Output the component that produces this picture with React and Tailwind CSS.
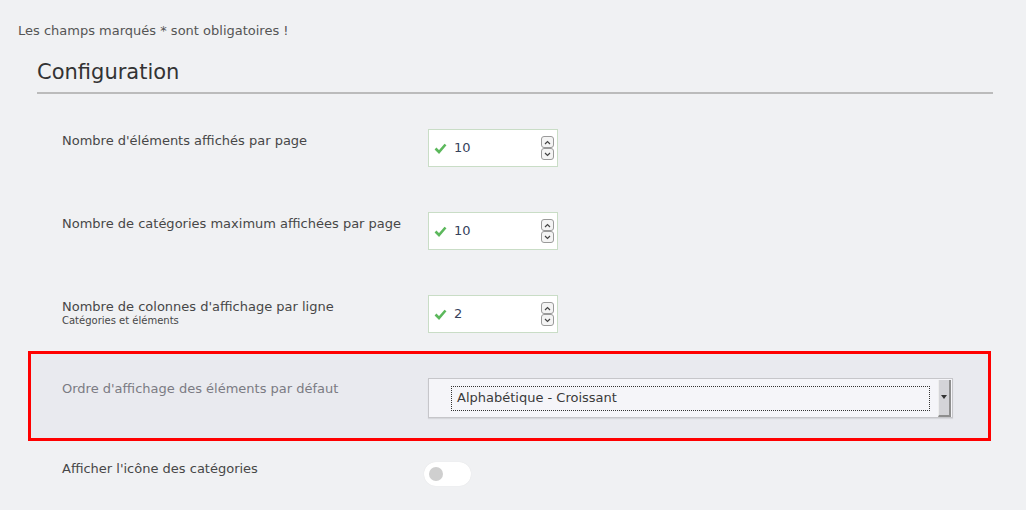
import React from "react";

function Check() {
  return (
    <svg width="13" height="11" viewBox="0 0 13 11" className="shrink-0">
      <path d="M1.5 5.5 L5 9 L11.5 1.5" fill="none" stroke="#5cb85c" strokeWidth="2.6" />
    </svg>
  );
}

function SpinButton({ up }) {
  return (
    <div className="w-[13px] h-[12px] rounded-[3px] border border-[#9a9a9a] bg-[#f4f4f4] flex items-center justify-center">
      <svg width="7" height="5" viewBox="0 0 7 5">
        <path d={up ? "M1 4 L3.5 1.5 L6 4" : "M1 1 L3.5 3.5 L6 1"} fill="none" stroke="#444" strokeWidth="1.2" />
      </svg>
    </div>
  );
}

function NumberInput({ value }) {
  return (
    <div className="w-[130px] h-[38px] bg-white border border-[#c9ddc6] flex items-center pl-[5px] pr-[3px]">
      <Check />
      <span className="ml-[7px] text-[13px] text-[#36425c]">{value}</span>
      <div className="ml-auto flex flex-col">
        <SpinButton up />
        <SpinButton />
      </div>
    </div>
  );
}

function Row({ label, sub, value }) {
  return (
    <div className="h-[83px] pt-[27px] pl-[34px] flex items-start">
      <div className="w-[366px] pt-[2px]">
        <div className="text-[13px] leading-[19px] text-[#474747]">{label}</div>
        {sub && <div className="text-[10px] leading-[10px] text-[#474747]">{sub}</div>}
      </div>
      <NumberInput value={value} />
    </div>
  );
}

export default function App() {
  const rows = [
    { label: "Nombre d'éléments affichés par page", value: "10" },
    { label: "Nombre de catégories maximum affichées par page", value: "10" },
    { label: "Nombre de colonnes d'affichage par ligne", sub: "Catégories et éléments", value: "2" },
  ];

  return (
    <div className="w-[1026px] h-[510px] overflow-hidden bg-[#f0f1f3] font-['DejaVu_Sans',sans-serif] pt-[22px]">
      <p className="ml-[18px] text-[13px] leading-[18px] text-[#555]">Les champs marqués * sont obligatoires !</p>

      {/* titre */}
      <div className="ml-[37px] w-[956px] mt-[19px] border-b-2 border-[#bbbbbb] pb-[7px]">
        <h2 className="text-[21px] leading-[26px] text-[#333]">Configuration</h2>
      </div>

      {/* champs */}
      <div className="ml-[28px] w-[963px] mt-[8px]">
        {rows.map((r) => (
          <Row key={r.label} {...r} />
        ))}

        <div className="h-[90px] border-[3px] border-[#ff0000] bg-[#e9eaef] pt-[24px] pl-[31px] flex items-start">
          <div className="w-[366px] pt-[1px] text-[13px] leading-[19px] text-[#7b7b83]">
            Ordre d'affichage des éléments par défaut
          </div>
          <div className="w-[525px] h-[40px] bg-[#f5f5f9] border border-[#c6c6ca] shadow-[0_1px_1px_rgba(0,0,0,0.08)] flex items-center pl-[22px] pr-[1px]">
            <div className="w-[479px] h-[25px] border border-dotted border-[#333] flex items-center pl-[5px] text-[13px] text-[#3a3a3a]">
              Alphabétique - Croissant
            </div>
            <div className="ml-auto w-[13px] h-[37px] bg-[#d4d4d8] border-l border-l-[#eee] border-r-2 border-r-[#8e8e8e] border-b-2 border-b-[#8e8e8e] flex items-center justify-center">
              <svg width="6" height="4" viewBox="0 0 6 4">
                <path d="M0 0 H6 L3 4 Z" fill="#333" />
              </svg>
            </div>
          </div>
        </div>

        <div className="pt-[18px] pl-[34px] flex items-start">
          <div className="w-[362px] text-[13px] leading-[19px] text-[#474747]">Afficher l'icône des catégories</div>
          <div className="mt-[3px] w-[47px] h-[24px] rounded-full bg-white shadow-[0_0_1px_rgba(0,0,0,0.1)] flex items-center pl-[5px]">
            <div className="w-[14px] h-[14px] rounded-full bg-[#cfcfcf]" />
          </div>
        </div>
      </div>
    </div>
  );
}
